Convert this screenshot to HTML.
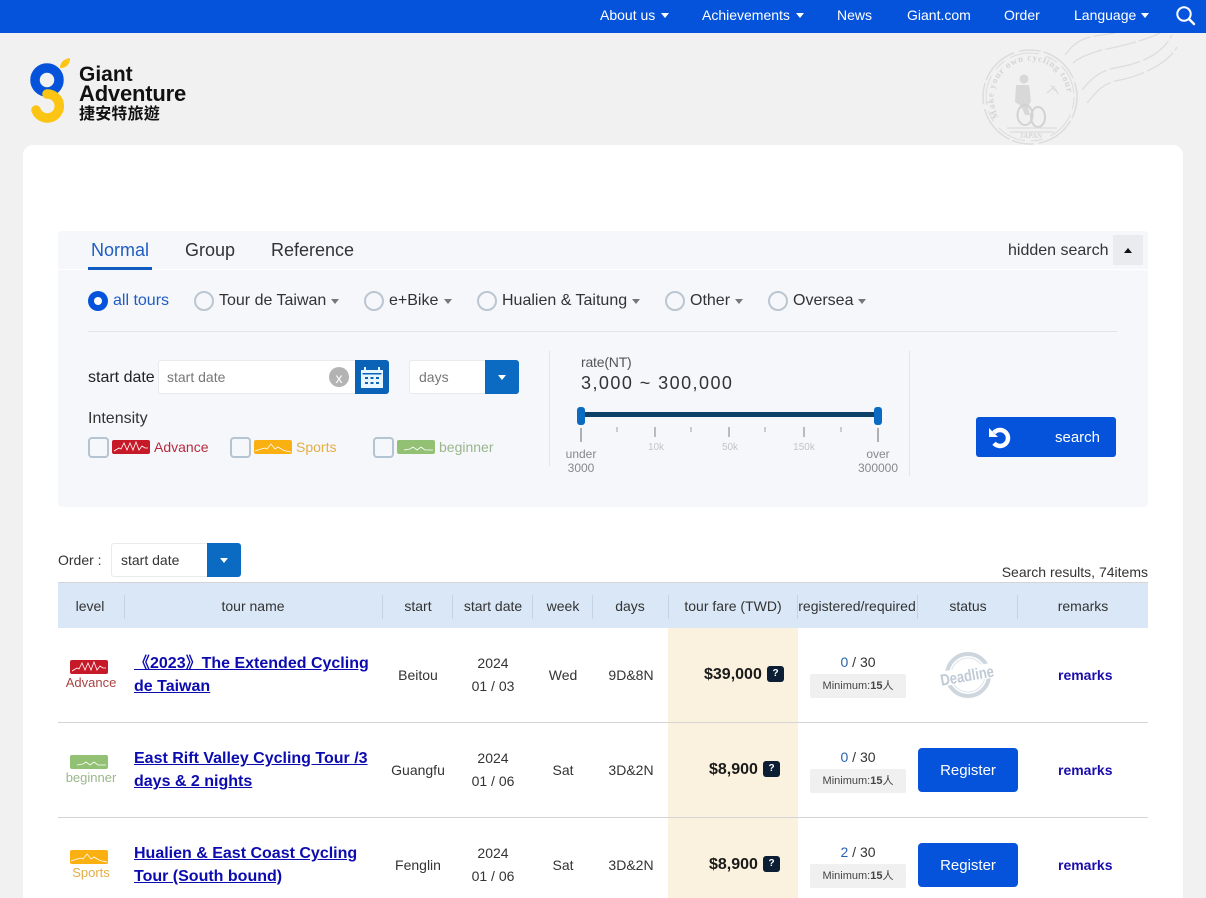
<!DOCTYPE html>
<html><head><meta charset="utf-8"><style>
html,body{margin:0;padding:0;width:1206px;height:898px;overflow:hidden;background:#f1f1f1;font-family:"Liberation Sans","Noto Sans CJK TC",sans-serif;color:#222}
#p{position:relative;width:1206px;height:898px;overflow:hidden}
.a,.t,.c{position:absolute}
.t{white-space:nowrap;line-height:20px}
.c{white-space:nowrap;line-height:20px;text-align:center;transform:translateX(-50%)}
.tri{position:absolute;width:0;height:0;border-left:4px solid transparent;border-right:4px solid transparent;border-top:5px solid #777}
.nav{color:#fff;font-size:14px}
.radio{position:absolute;width:16px;height:16px;border:2px solid #bcc6d0;border-radius:50%;background:#f5f7fb}
.chk{position:absolute;width:17px;height:17px;border:2px solid #b4c4d2;border-radius:4px;background:#f5f7fb}
.lnk{position:absolute;font-weight:bold;font-size:16px;line-height:23px;color:#0b0bb0;text-decoration:underline;white-space:nowrap}
.hs{position:absolute;top:595px;width:1px;height:24px;background:#c5d3e3}
.reg{position:absolute;left:918px;width:100px;height:44px;background:#0553db;border-radius:4px;color:#fff;font-size:15px;line-height:46px;text-align:center}
.min{position:absolute;left:810px;width:96px;height:24px;background:#f0f0f0;border-radius:2px;font-size:11px;line-height:25px;text-align:center;color:#444}
.q{position:absolute;width:17px;height:16px;background:#0c1e33;border-radius:3px;color:#fff;font-size:10px;font-weight:bold;line-height:16px;text-align:center}
.rm{position:absolute;left:1058px;font-size:14px;font-weight:bold;color:#1a0dab;line-height:20px}
.hr{position:absolute;left:58px;width:1090px;height:1px;background:#d4d4d4}
.tick{position:absolute;width:2px;background:#b0b0b0}
.sm{font-size:14px;color:#333}
</style></head><body><div id="p">

<div class="a" style="left:0;top:0;width:1206px;height:33px;background:#0553db"></div>
<span class="t nav" style="left:600px;top:5px">About us</span><div class="tri" style="left:661px;top:13px;border-top-color:#fff"></div>
<span class="t nav" style="left:702px;top:5px">Achievements</span><div class="tri" style="left:796px;top:13px;border-top-color:#fff"></div>
<span class="t nav" style="left:837px;top:5px">News</span>
<span class="t nav" style="left:907px;top:5px">Giant.com</span>
<span class="t nav" style="left:1004px;top:5px">Order</span>
<span class="t nav" style="left:1074px;top:5px">Language</span><div class="tri" style="left:1141px;top:13px;border-top-color:#fff"></div>
<svg class="a" style="left:1174px;top:4px" width="22" height="22" viewBox="0 0 22 22"><circle cx="10" cy="10" r="6.7" fill="none" stroke="#fff" stroke-width="2"/><path d="M15 15l5 5" stroke="#fff" stroke-width="2.4" stroke-linecap="round"/></svg>

<svg class="a" style="left:20px;top:50px" width="60" height="80" viewBox="0 0 60 80">
<circle cx="27" cy="30" r="12" fill="none" stroke="#0553db" stroke-width="9.500"/>
<path d="M27 44A12 12 0 1 1 16 60" fill="none" stroke="#fdc513" stroke-width="9.500" stroke-linecap="round"/>
<path d="M40 18C40 12 44 9 50 8C50 14 47 18 40 18Z" fill="#fdc513"/>
</svg>
<span class="t" style="left:79px;top:65px;font-size:21px;font-weight:bold;color:#111;line-height:20px">Giant</span>
<span class="t" style="left:79px;top:83px;font-size:22px;font-weight:bold;color:#111;line-height:22px;letter-spacing:-.2px">Adventure</span>
<span class="t" style="left:79px;top:105px;font-size:16px;font-weight:bold;color:#111;line-height:20px;letter-spacing:.2px">捷安特旅遊</span>

<svg class="a" style="left:975px;top:33px" width="215" height="115" viewBox="0 0 215 115" fill="none" stroke="#dcdcdc">
<defs><path id="ring" d="M24 84A37 37 0 1 1 90 78"/></defs>
<circle cx="55" cy="64" r="47" stroke-width="1.500" stroke-dasharray="22 3 40 5"/><circle cx="55" cy="64" r="44" stroke-width="1" stroke-dasharray="12 6 30 8"/>
<text font-family="Liberation Serif" font-size="9" font-weight="bold" fill="#d4d4d4" stroke="none" letter-spacing=".9"><textPath href="#ring">Make your own cycling tour</textPath></text>
<circle cx="49" cy="46" r="4.500" fill="#d8d8d8" stroke="none"/>
<path d="M41 52h13l2 16-3 6 2 8h-5l-4-9-6-4z" fill="#d8d8d8" stroke="none"/>
<ellipse cx="50" cy="82" rx="7.500" ry="10" stroke="#d2d2d2" stroke-width="2"/><ellipse cx="63" cy="84" rx="7" ry="10" stroke="#d2d2d2" stroke-width="2"/>
<path d="M32 95h50M35 99h44" stroke-width="1.200"/>
<text x="56" y="105" text-anchor="middle" font-family="Liberation Serif" font-size="7" font-weight="bold" fill="#d6d6d6" stroke="none">JAPAN</text>
<path d="M72 60l8-7M76 52l4 6M80 55l3 6" stroke-width="1.200"/>
<path d="M112 70C122 58 128 50 145 47S192 32 202 14M107 57C116 46 124 38 140 35S185 26 197 2M98 30C105 24 112 22 120 19S160 12 185 0M90 22C96 14 102 8 112 5S130 2 140 0" stroke-width="1.200" stroke-dasharray="32 3"/>
</svg>

<div class="a" style="left:23px;top:145px;width:1160px;height:760px;background:#fff;border-radius:10px"></div>
<div class="a" style="left:58px;top:231px;width:1090px;height:276px;background:#f5f7fb;border-radius:4px"></div>
<div class="a" style="left:58px;top:269px;width:1090px;height:1px;background:#fff"></div>

<span class="t" style="left:91px;top:240px;font-size:18px;color:#1f5cc4">Normal</span>
<div class="a" style="left:88px;top:267px;width:64px;height:3px;background:#0f5bc0"></div>
<span class="t" style="left:185px;top:240px;font-size:18px;color:#333">Group</span>
<span class="t" style="left:271px;top:240px;font-size:18px;color:#333">Reference</span>
<span class="t" style="left:1008px;top:240px;font-size:16px;color:#333;line-height:20px;padding-top:1px">hidden search</span>
<div class="a" style="left:1113px;top:235px;width:30px;height:30px;background:#e9ebef"></div>
<div class="tri" style="left:1124px;top:248px;border-top:0;border-bottom:5px solid #111"></div>

<div class="a" style="left:88px;top:291px;width:20px;height:20px;border-radius:50%;background:#0553db"></div>
<div class="a" style="left:94px;top:297px;width:8px;height:8px;border-radius:50%;background:#fff"></div>
<span class="t" style="left:113px;top:291px;font-size:16px;color:#1f5cc4">all tours</span>
<div class="radio" style="left:194px;top:291px"></div><span class="t" style="left:219px;top:291px;font-size:16px;color:#333">Tour de Taiwan</span><div class="tri" style="left:331px;top:299px"></div>
<div class="radio" style="left:364px;top:291px"></div><span class="t" style="left:389px;top:291px;font-size:16px;color:#333">e+Bike</span><div class="tri" style="left:444px;top:299px"></div>
<div class="radio" style="left:477px;top:291px"></div><span class="t" style="left:502px;top:291px;font-size:16px;color:#333">Hualien &amp; Taitung</span><div class="tri" style="left:632px;top:299px"></div>
<div class="radio" style="left:665px;top:291px"></div><span class="t" style="left:690px;top:291px;font-size:16px;color:#333">Other</span><div class="tri" style="left:735px;top:299px"></div>
<div class="radio" style="left:768px;top:291px"></div><span class="t" style="left:793px;top:291px;font-size:16px;color:#333">Oversea</span><div class="tri" style="left:858px;top:299px"></div>
<div class="a" style="left:88px;top:331px;width:1029px;height:1px;background:#e2e4e6"></div>

<span class="t" style="left:88px;top:368px;font-size:16px;color:#222">start date</span>
<div class="a" style="left:158px;top:360px;width:197px;height:32px;background:#fff;border:1px solid #e8eaee;border-radius:3px 0 0 3px"></div>
<span class="t" style="left:167px;top:367px;font-size:14px;color:#777">start date</span>
<div class="a" style="left:329px;top:367px;width:20px;height:20px;border-radius:50%;background:#b3b3b3;color:#fff;font-size:14px;line-height:23px;text-align:center">x</div>
<div class="a" style="left:355px;top:360px;width:34px;height:34px;background:#0b63b8;border-radius:0 3px 3px 0"></div>
<svg class="a" style="left:361px;top:366px" width="22" height="22" viewBox="0 0 22 22"><path d="M0 4h3V1h2v3h12V1h2v3h3v18H0z" fill="#e8f6ff"/><rect x="1.500" y="7" width="19" height="1.500" fill="#0b63b8"/><path d="M4 11h3v2H4zM9.500 11h3v2h-3zM15 11h3v2h-3zM4 16h3v2H4zM9.500 16h3v2h-3zM15 16h3v2h-3z" fill="#0b63b8"/></svg>
<div class="a" style="left:409px;top:360px;width:76px;height:32px;background:#fff;border:1px solid #e8eaee;border-radius:3px 0 0 3px"></div>
<span class="t" style="left:419px;top:367px;font-size:14px;color:#777">days</span>
<div class="a" style="left:485px;top:360px;width:34px;height:34px;background:#0b6bc2;border-radius:0 3px 3px 0"></div>
<div class="tri" style="left:498px;top:375px;border-top-color:#fff"></div>

<span class="t" style="left:88px;top:409px;font-size:16px;color:#333">Intensity</span>
<div class="chk" style="left:88px;top:437px"></div>
<svg class="a" style="left:112px;top:440px" width="38" height="14" viewBox="0 0 38 14"><rect width="38" height="14" rx="2" fill="#c71a28"/><path d="M2 11l5-3 2 1 3-6 3 7 3-7 3 7 3-8 3 8 3-4 3 2h3" fill="none" stroke="#fff" stroke-width=".8"/></svg>
<span class="t" style="left:154px;top:437px;font-size:14px;color:#b72b3d">Advance</span>
<div class="chk" style="left:230px;top:437px"></div>
<svg class="a" style="left:254px;top:440px" width="38" height="14" viewBox="0 0 38 14"><rect width="38" height="14" rx="2" fill="#fbb012"/><path d="M1 11l6-2 4-1 2 1 4-5 4 5 3-2 5 3 3 1 5 1" fill="none" stroke="#fff" stroke-width=".8"/></svg>
<span class="t" style="left:296px;top:437px;font-size:14px;color:#e3ad47">Sports</span>
<div class="chk" style="left:373px;top:437px"></div>
<svg class="a" style="left:397px;top:440px" width="38" height="14" viewBox="0 0 38 14"><rect width="38" height="14" rx="2" fill="#92c174"/><path d="M7 10l6-1 3-2 4 3 4-3 4 3 8 0" fill="none" stroke="#fff" stroke-width=".8"/></svg>
<span class="t" style="left:439px;top:437px;font-size:14px;color:#9ab68c">beginner</span>

<div class="a" style="left:549px;top:351px;width:1px;height:115px;background:#e2e4e6"></div>
<div class="a" style="left:909px;top:351px;width:1px;height:125px;background:#e2e4e6"></div>
<span class="t" style="left:581px;top:352px;font-size:14px;color:#555;letter-spacing:-.2px">rate(NT)</span>
<span class="t" style="left:581px;top:373px;font-size:18px;color:#333;letter-spacing:1.450px">3,000 ~ 300,000</span>
<div class="a" style="left:581px;top:412px;width:297px;height:5px;background:#0d4168"></div>
<div class="a" style="left:577px;top:407px;width:8px;height:18px;background:#0b6bc2;border-radius:3px"></div>
<div class="a" style="left:874px;top:407px;width:8px;height:18px;background:#0b6bc2;border-radius:3px"></div>
<div class="tick" style="left:580px;top:428px;height:14px"></div>
<div class="tick" style="left:616px;top:427px;height:5px;background:#ccc"></div>
<div class="tick" style="left:654px;top:427px;height:10px;background:#bbb"></div>
<div class="tick" style="left:690px;top:427px;height:5px;background:#ccc"></div>
<div class="tick" style="left:728px;top:427px;height:10px;background:#bbb"></div>
<div class="tick" style="left:764px;top:427px;height:5px;background:#ccc"></div>
<div class="tick" style="left:803px;top:427px;height:10px;background:#bbb"></div>
<div class="tick" style="left:840px;top:427px;height:5px;background:#ccc"></div>
<div class="tick" style="left:877px;top:428px;height:14px"></div>
<span class="c" style="left:581px;top:444px;font-size:12px;color:#888">under</span>
<span class="c" style="left:581px;top:458px;font-size:12px;color:#888">3000</span>
<span class="c" style="left:656px;top:438px;font-size:10px;color:#c4c4c4">10k</span>
<span class="c" style="left:730px;top:438px;font-size:10px;color:#c4c4c4">50k</span>
<span class="c" style="left:804px;top:438px;font-size:10px;color:#c4c4c4">150k</span>
<span class="c" style="left:878px;top:444px;font-size:12px;color:#888">over</span>
<span class="c" style="left:878px;top:458px;font-size:12px;color:#888">300000</span>

<div class="a" style="left:976px;top:417px;width:140px;height:40px;background:#0553db;border-radius:3px"></div>
<svg class="a" style="left:988px;top:426px" width="24" height="24" viewBox="0 0 24 24"><path d="M6 6.700A8 8 0 1 1 6 17.300" fill="none" stroke="#fff" stroke-width="4.500"/><path d="M1 2v9h9z" fill="#fff"/></svg>
<span class="t" style="left:1055px;top:428px;font-size:15px;color:#fff">search</span>

<span class="t" style="left:58px;top:550px;font-size:14px;color:#333">Order :</span>
<div class="a" style="left:111px;top:543px;width:95px;height:32px;background:#fff;border:1px solid #e8eaee;border-radius:3px 0 0 3px"></div>
<span class="t" style="left:121px;top:550px;font-size:14px;color:#333">start date</span>
<div class="a" style="left:207px;top:543px;width:34px;height:34px;background:#0b6bc2;border-radius:0 3px 3px 0"></div>
<div class="tri" style="left:220px;top:558px;border-top-color:#fff"></div>
<span class="t" style="right:58px;top:562px;font-size:14px;color:#333">Search results, 74items</span>

<div class="a" style="left:58px;top:582px;width:1090px;height:1px;background:#d4d4d4"></div>
<div class="a" style="left:58px;top:583px;width:1090px;height:45px;background:#d9e7f7"></div>
<div class="hs" style="left:124px"></div><div class="hs" style="left:382px"></div><div class="hs" style="left:452px"></div><div class="hs" style="left:532px"></div><div class="hs" style="left:592px"></div><div class="hs" style="left:668px"></div><div class="hs" style="left:797px"></div><div class="hs" style="left:917px"></div><div class="hs" style="left:1017px"></div>
<span class="c sm" style="left:90px;top:596px">level</span>
<span class="c sm" style="left:253px;top:596px">tour name</span>
<span class="c sm" style="left:418px;top:596px">start</span>
<span class="c sm" style="left:493px;top:596px">start date</span>
<span class="c sm" style="left:563px;top:596px">week</span>
<span class="c sm" style="left:630px;top:596px">days</span>
<span class="c sm" style="left:733px;top:596px">tour fare (TWD)</span>
<span class="c sm" style="left:857px;top:596px">registered/required</span>
<span class="c sm" style="left:968px;top:596px">status</span>
<span class="c sm" style="left:1083px;top:596px">remarks</span>

<div class="a" style="left:668px;top:628px;width:130px;height:270px;background:#faf2de"></div>
<div class="hr" style="top:722px"></div><div class="hr" style="top:817px"></div>

<svg class="a" style="left:70px;top:660px" width="38" height="14" viewBox="0 0 38 14"><rect width="38" height="14" rx="2" fill="#c71a28"/><path d="M2 11l5-3 2 1 3-6 3 7 3-7 3 7 3-8 3 8 3-4 3 2h3" fill="none" stroke="#fff" stroke-width=".8"/></svg>
<span class="c" style="left:91px;top:673px;font-size:13px;color:#a94442">Advance</span>
<svg class="a" style="left:70px;top:755px" width="38" height="14" viewBox="0 0 38 14"><rect width="38" height="14" rx="2" fill="#92c174"/><path d="M7 10l6-1 3-2 4 3 4-3 4 3 8 0" fill="none" stroke="#fff" stroke-width=".8"/></svg>
<span class="c" style="left:91px;top:768px;font-size:13px;color:#9ab68c">beginner</span>
<svg class="a" style="left:70px;top:850px" width="38" height="14" viewBox="0 0 38 14"><rect width="38" height="14" rx="2" fill="#fbb012"/><path d="M1 11l6-2 4-1 2 1 4-5 4 5 3-2 5 3 3 1 5 1" fill="none" stroke="#fff" stroke-width=".8"/></svg>
<span class="c" style="left:91px;top:863px;font-size:13px;color:#e3ad47">Sports</span>

<a class="lnk" style="left:134px;top:652px">《2023》The Extended Cycling<br>de Taiwan</a>
<a class="lnk" style="left:134px;top:747px">East Rift Valley Cycling Tour /3<br>days &amp; 2 nights</a>
<a class="lnk" style="left:134px;top:842px">Hualien &amp; East Coast Cycling<br>Tour (South bound)</a>

<span class="c sm" style="left:418px;top:665px">Beitou</span>
<span class="c sm" style="left:418px;top:760px">Guangfu</span>
<span class="c sm" style="left:418px;top:855px">Fenglin</span>
<span class="c sm" style="left:493px;top:653px">2024</span><span class="c sm" style="left:493px;top:676px">01 / 03</span>
<span class="c sm" style="left:493px;top:748px">2024</span><span class="c sm" style="left:493px;top:771px">01 / 06</span>
<span class="c sm" style="left:493px;top:843px">2024</span><span class="c sm" style="left:493px;top:866px">01 / 06</span>
<span class="c sm" style="left:563px;top:665px">Wed</span><span class="c sm" style="left:563px;top:760px">Sat</span><span class="c sm" style="left:563px;top:855px">Sat</span>
<span class="c sm" style="left:631px;top:665px">9D&amp;8N</span><span class="c sm" style="left:631px;top:760px">3D&amp;2N</span><span class="c sm" style="left:631px;top:855px">3D&amp;2N</span>

<span class="t" style="left:704px;top:665px;font-size:16px;font-weight:bold;color:#1a1a1a">$39,000</span><div class="q" style="left:767px;top:666px">?</div>
<span class="t" style="left:709px;top:760px;font-size:16px;font-weight:bold;color:#1a1a1a">$8,900</span><div class="q" style="left:763px;top:761px">?</div>
<span class="t" style="left:709px;top:855px;font-size:16px;font-weight:bold;color:#1a1a1a">$8,900</span><div class="q" style="left:763px;top:856px">?</div>

<span class="c sm" style="left:858px;top:652px"><span style="color:#2a62b0">0</span> / 30</span><div class="min" style="top:674px">Minimum:<b>15</b>人</div>
<span class="c sm" style="left:858px;top:747px"><span style="color:#2a62b0">0</span> / 30</span><div class="min" style="top:769px">Minimum:<b>15</b>人</div>
<span class="c sm" style="left:858px;top:842px"><span style="color:#2a62b0">2</span> / 30</span><div class="min" style="top:864px">Minimum:<b>15</b>人</div>

<svg class="a" style="left:938px;top:650px" width="60" height="50" viewBox="0 0 60 50">
<circle cx="30" cy="25" r="21" fill="none" stroke="#ced6dd" stroke-width="4"/>
<circle cx="30" cy="25" r="17" fill="none" stroke="#dfe4e9" stroke-width="1"/>
<rect x="2" y="17" width="56" height="15" fill="#fff" transform="rotate(-10 30 25)"/>
<text x="29" y="31" text-anchor="middle" font-family="Liberation Sans" font-size="16" font-weight="bold" fill="#bfcad5" textLength="54" lengthAdjust="spacingAndGlyphs" transform="rotate(-10 30 25)">Deadline</text>
</svg>
<div class="reg" style="top:748px">Register</div>
<div class="reg" style="top:843px">Register</div>
<span class="rm" style="top:665px">remarks</span><span class="rm" style="top:760px">remarks</span><span class="rm" style="top:855px">remarks</span>

</div></body></html>
